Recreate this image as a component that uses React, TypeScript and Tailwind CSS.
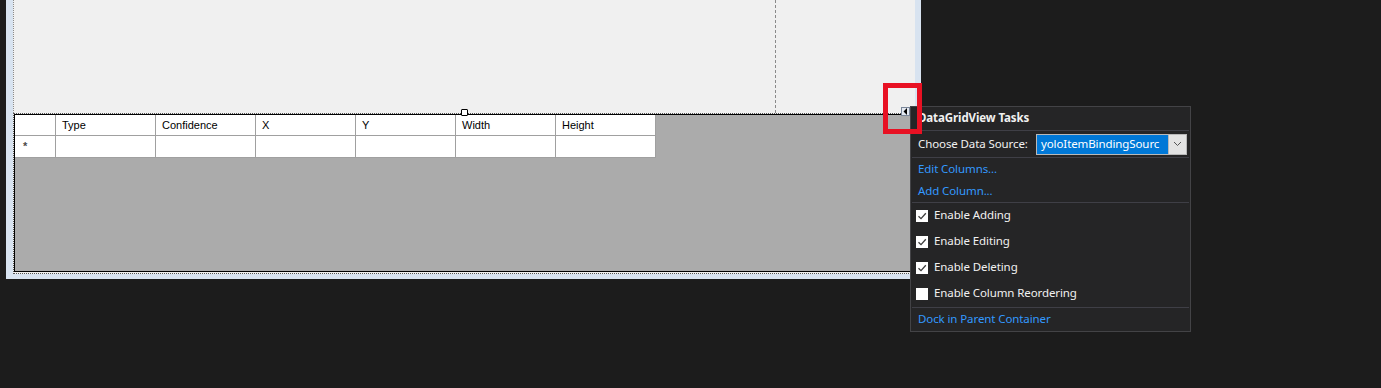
import React from "react";

const columns = ["Type", "Confidence", "X", "Y", "Width", "Height"];

const checks = [
  { label: "Enable Adding", checked: true },
  { label: "Enable Editing", checked: true },
  { label: "Enable Deleting", checked: true },
  { label: "Enable Column Reordering", checked: false },
];

function Sep() {
  return <div className="h-px mx-[1px] bg-[#3f3f46]" />;
}

function CheckBox({ checked }: { checked: boolean }) {
  return (
    <div className="w-[12px] h-[12px] bg-white flex items-center justify-center shrink-0">
      {checked && (
        <svg width="10" height="10" viewBox="0 0 10 10">
          <path d="M1.5 5.2 L4 7.6 L8.8 2.2" fill="none" stroke="#3c3c3c" strokeWidth="1.3" />
        </svg>
      )}
    </div>
  );
}

function TasksPanel() {
  return (
    <div
      className="absolute left-[910px] top-[106px] w-[281px] bg-[#252526] border border-[#434346] flex flex-col text-[11.5px] tracking-[-0.1px] text-[#f1f1f1]"
      style={{ fontFamily: '"Noto Sans", "Open Sans", sans-serif' }}
    >
      <div className="h-[23px] flex items-center pl-[7px] pb-[2px] font-bold">DataGridView Tasks</div>
      <Sep />
      <div className="h-[26px] flex items-center pl-[7px]">
        <span className="w-[118px] pb-[1px]">Choose Data Source:</span>
        <div className="flex h-[21px] w-[151px] border border-[#b9b9b9]">
          <div className="flex-1 bg-[#0078d7] text-white flex items-center pl-[4px] pb-[1px] leading-none overflow-hidden whitespace-nowrap">
            yoloItemBindingSourc
          </div>
          <div className="w-[18px] bg-[#e3e3e3] border-l border-[#b9b9b9] flex items-center justify-center">
            <svg width="9" height="6" viewBox="0 0 9 6">
              <path d="M1 1 L4.5 4.5 L8 1" fill="none" stroke="#555" strokeWidth="1" />
            </svg>
          </div>
        </div>
      </div>
      <Sep />
      <div className="h-[22px] flex items-center pl-[7px] pb-[1px] text-[#3399ff]">Edit Columns...</div>
      <div className="h-[22px] flex items-center pl-[7px] pb-[1px] text-[#3399ff]">Add Column...</div>
      <Sep />
      {checks.map((c) => (
        <div key={c.label} className="h-[26px] flex items-center pl-[5px] gap-[6px]">
          <CheckBox checked={c.checked} />
          <span className="pb-[2px]">{c.label}</span>
        </div>
      ))}
      <Sep />
      <div className="h-[23px] flex items-center pl-[7px] pb-[2px] text-[#3399ff]">Dock in Parent Container</div>
    </div>
  );
}

function Grid() {
  return (
    <div
      className="h-[158px] border border-black bg-[#ababab] text-[11px] text-black"
      style={{ fontFamily: '"Liberation Sans", Arial, sans-serif' }}
    >
      <div className="flex h-[21px]">
        <div className="w-[41px] bg-white border-r border-b border-[#a0a0a0]" />
        {columns.map((c) => (
          <div key={c} className="w-[100px] bg-white border-r border-b border-[#a0a0a0] flex items-center pl-[6px] pt-[1px]">
            {c}
          </div>
        ))}
      </div>
      <div className="flex h-[22px]">
        <div className="w-[41px] bg-white border-r border-b border-[#a0a0a0] flex items-center pl-[8px] font-bold text-[#4a4a4a]">
          *
        </div>
        {columns.map((c) => (
          <div key={c} className="w-[100px] bg-white border-r border-b border-[#a0a0a0]" />
        ))}
      </div>
    </div>
  );
}

export default function App() {
  return (
    <div className="relative w-[1381px] h-[388px] bg-[#1c1c1c] overflow-hidden">
      <div className="ml-[6px] w-[915px] h-[279px] bg-[#d8e3f0] pl-[7px] pr-[6px] pb-[5px] flex flex-col">
        <div className="h-[113px] bg-[#f0f0f0] border-l border-dotted border-[#8a8a8a]">
          <div className="w-[762px] h-full border-r border-dashed border-[#8a8a8a]" />
        </div>
        <div className="h-[161px] bg-[#f0f0f0] border-l border-t border-b border-dotted border-[#555] pb-[1px]">
          <Grid />
        </div>
      </div>

      {/* selection grab handle */}
      <div className="absolute left-[461px] top-[109px] w-[7px] h-[7px] bg-white border border-black rounded-[1px]" />

      {/* smart tag glyph */}
      <div className="absolute left-[901px] top-[107px] w-[9px] h-[9px] bg-[#e4e9f1] border border-[#7a8699] flex items-center justify-center">
        <svg width="5" height="7" viewBox="0 0 5 7">
          <path d="M4 0 L0.5 3.5 L4 7 Z" fill="#000" />
        </svg>
      </div>

      <TasksPanel />

      {/* red highlight box */}
      <div className="absolute left-[883px] top-[83px] w-[39px] h-[51px] border-[5px] border-[#e81123]" />
    </div>
  );
}
